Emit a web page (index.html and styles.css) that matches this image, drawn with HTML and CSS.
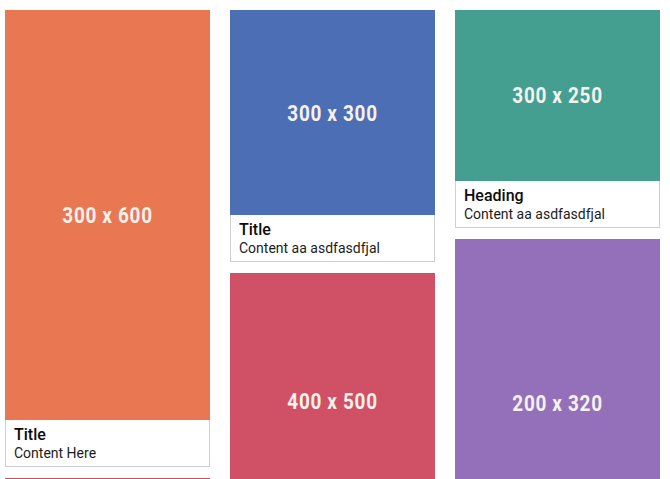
FILE: index.html
```html
<!DOCTYPE html>
<html lang="en">
<head>
<meta charset="utf-8">
<title>Cards</title>
<link rel="stylesheet" href="styles.css">
</head>
<body>
<main class="masonry">
  <section class="column">
    <article class="card">
      <div class="ph ph-orange" style="aspect-ratio: 300 / 600;"><span class="ph-label">300 x 600</span></div>
      <div class="caption">
        <h2 class="caption-title">Title</h2>
        <p class="caption-text">Content Here</p>
      </div>
    </article>
    <article class="card">
      <div class="ph ph-red" style="aspect-ratio: 300 / 300;"><span class="ph-label">300 x 300</span></div>
      <div class="caption">
        <h2 class="caption-title">Title</h2>
        <p class="caption-text">Content Here</p>
      </div>
    </article>
  </section>
  <section class="column">
    <article class="card">
      <div class="ph ph-blue" style="aspect-ratio: 300 / 300;"><span class="ph-label">300 x 300</span></div>
      <div class="caption">
        <h2 class="caption-title">Title</h2>
        <p class="caption-text">Content aa asdfasdfjal</p>
      </div>
    </article>
    <article class="card">
      <div class="ph ph-red" style="aspect-ratio: 400 / 500;"><span class="ph-label">400 x 500</span></div>
      <div class="caption">
        <h2 class="caption-title">Title</h2>
        <p class="caption-text">Content aa asdfasdfjal</p>
      </div>
    </article>
  </section>
  <section class="column">
    <article class="card">
      <div class="ph ph-teal" style="aspect-ratio: 300 / 250;"><span class="ph-label">300 x 250</span></div>
      <div class="caption">
        <h2 class="caption-title">Heading</h2>
        <p class="caption-text">Content aa asdfasdfjal</p>
      </div>
    </article>
    <article class="card">
      <div class="ph ph-purple" style="aspect-ratio: 200 / 320;"><span class="ph-label">200 x 320</span></div>
      <div class="caption">
        <h2 class="caption-title">Title</h2>
        <p class="caption-text">Content aa asdfasdfjal</p>
      </div>
    </article>
  </section>
</main>
</body>
</html>
```

FILE: styles.css
```css
html, body {
  margin: 0;
  padding: 0;
  background: #ffffff;
  overflow: hidden;
}

body {
  font-family: Roboto, "Liberation Sans", sans-serif;
  color: #111;
}

.masonry {
  display: grid;
  grid-template-columns: 205px 205px 205px;
  column-gap: 20px;
  padding: 10px 5px;
  align-items: start;
}

.column {
  display: flex;
  flex-direction: column;
  gap: 11px;
}

.card {
  display: flex;
  flex-direction: column;
}

.ph {
  width: 100%;
  display: flex;
  align-items: center;
  justify-content: center;
  padding-top: 2px;
  box-sizing: border-box;
}

.ph-label {
  display: inline-block;
  color: #f6f1ec;
  font-family: Roboto, "Liberation Sans", sans-serif;
  font-weight: 700;
  font-size: 22px;
  line-height: 24px;
  letter-spacing: 0.8px;
  transform: scaleX(0.86);
  white-space: nowrap;
}

.ph-orange { background: #e97752; }
.ph-blue { background: #4b6eb4; }
.ph-teal { background: #459f90; }
.ph-red { background: #d05065; }
.ph-purple { background: #9570ba; }

.caption {
  border: 1px solid #cfcfcf;
  border-top: none;
  padding: 5px 8px 4px;
}

.caption-title {
  margin: 0;
  font-size: 16px;
  font-weight: 500;
  line-height: 20px;
  color: #0c0c0c;
}

.caption-text {
  margin: 0;
  font-size: 14px;
  line-height: 17px;
  color: #1c1c1c;
}
```
